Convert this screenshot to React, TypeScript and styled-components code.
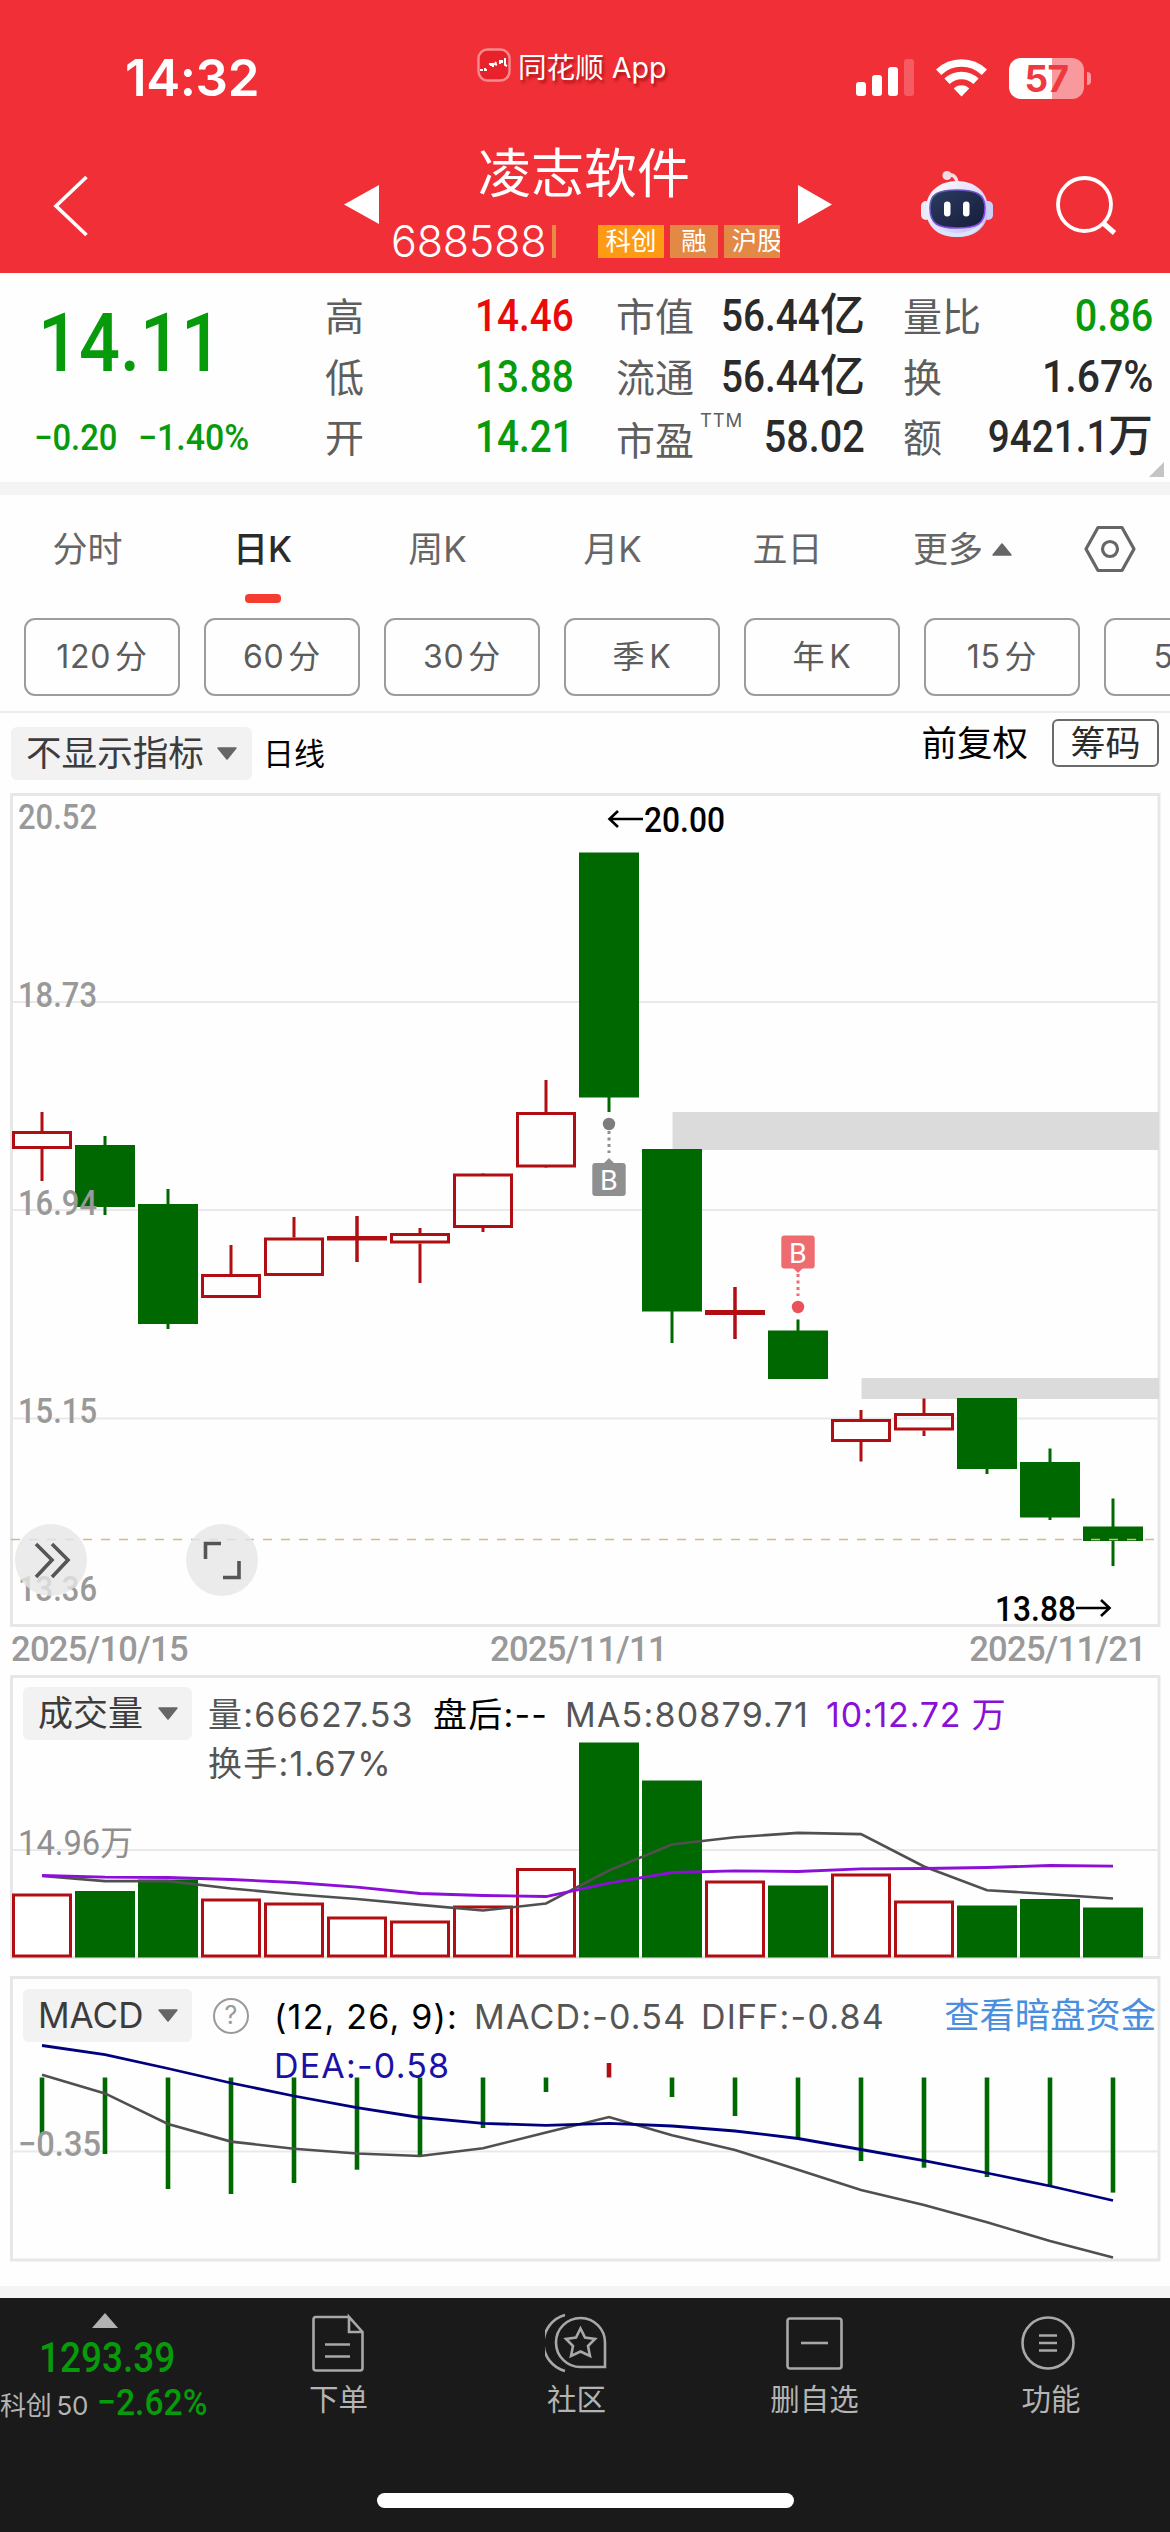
import React from "react";
import styled, { createGlobalStyle } from "styled-components";

const CJK = `"Noto Sans CJK SC"`;
const UI = `Inter, ${CJK}, sans-serif`;
const DIN = `Roboto, ${CJK}, sans-serif`;
const GREEN = "#079a0b";
const UP = "#b00e12";
const DOWN = "#006800";

const Global = createGlobalStyle`
  body { margin: 0; background: #fff; font-family: ${UI}; color: #333; }
  * { box-sizing: border-box; }
  button { font: inherit; color: inherit; background: none; border: 0; padding: 0; margin: 0; }
  svg { display: block; flex: none; }
`;

const Screen = styled.div`
  width: 1170px;
  height: 2532px;
  overflow: hidden;
  display: flex;
  flex-direction: column;
  background: #fefefe;
  white-space: nowrap;
`;

/* ---------- header ---------- */
const Header = styled.header`
  height: 273px;
  flex: none;
  background: #f12f37;
  color: #fff;
`;
const StatusBar = styled.div`
  height: 140px;
  padding-top: 40px;
  display: grid;
  grid-template-columns: 477px 1fr 314px;
  align-items: start;
`;
const Time = styled.div`
  padding-left: 125px;
  font-size: 51px;
  font-weight: 600;
  line-height: 76px;
  letter-spacing: -0.4px;
`;
const Watermark = styled.div`
  height: 50px;
  display: flex;
  align-items: center;
  gap: 7px;
  font-size: 28.6px;
  text-shadow: 2px 3px 3px rgba(120, 0, 0, 0.6);
`;
const Indicators = styled.div`
  height: 76px;
  display: flex;
  align-items: center;
`;
const Battery = styled.div`
  width: 75px;
  height: 41px;
  margin-left: 22px;
  border-radius: 12px;
  background: linear-gradient(90deg, #fff 57%, #f8999d 57%);
  color: #ee3940;
  font-size: 37px;
  font-weight: 700;
  line-height: 41px;
  text-align: center;
  letter-spacing: -0.5px;
`;
const BatteryTip = styled.div`
  width: 4px;
  height: 13px;
  margin-left: 3px;
  border-radius: 0 5px 5px 0;
  background: #f8999d;
`;
const TitleBar = styled.div`
  height: 133px;
  display: flex;
  align-items: flex-start;
`;
const IconButton = styled.button<{ $left: number; $top: number }>`
  margin-left: ${(p) => p.$left}px;
  margin-top: ${(p) => p.$top}px;
`;
const TitleBlock = styled.div`
  width: 419px;
`;
const StockName = styled.h1`
  margin: 0;
  padding-right: 9px;
  text-align: center;
  font-size: 53px;
  font-weight: 400;
  line-height: 68px;
`;
const CodeRow = styled.div`
  margin-top: 15px;
  width: 401px;
  height: 36px;
  padding-left: 12px;
  display: flex;
  align-items: center;
  overflow: hidden;
`;
const Code = styled.span`
  flex: none;
  width: 161px;
  font-size: 43px;
  font-weight: 300;
  line-height: 36px;
  letter-spacing: -0.2px;
`;
const CodeBar = styled.span`
  flex: none;
  width: 4px;
  height: 33px;
  margin-right: 42px;
  background: #e78b45;
`;
const Tag = styled.span<{ $bg: string; $w: number }>`
  flex: none;
  width: ${(p) => p.$w}px;
  height: 33px;
  margin-right: 6px;
  background: ${(p) => p.$bg};
  font-size: 25.5px;
  line-height: 32px;
  text-align: center;
`;

/* ---------- quote ---------- */
const Quote = styled.section`
  position: relative;
  height: 209px;
  flex: none;
  padding-right: 17px;
  display: grid;
  grid-template-columns: 325px 249px 249px 250px;
  column-gap: 0;
`;
const Din = styled.span<{ $scale?: number; $origin?: string }>`
  display: inline-block;
  font-family: ${DIN};
  font-weight: 500;
  transform: scaleX(${(p) => p.$scale ?? 0.87});
  transform-origin: ${(p) => p.$origin ?? "left"} center;
`;
const PriceBox = styled.div`
  color: ${GREEN};
  padding-top: 29px;
`;
const Price = styled.div`
  padding-left: 38px;
  font-size: 82px;
  line-height: 80px;
`;
const Change = styled.div`
  padding: 35px 0 0 34px;
  display: grid;
  grid-template-columns: 104px auto;
  font-size: 36px;
  line-height: 40px;
`;
const Stats = styled.div<{ $shift: number }>`
  margin-left: ${(p) => p.$shift}px;
  margin-right: ${(p) => -p.$shift}px;
  padding-top: 13px;
`;
const Stat = styled.div`
  height: 60.6px;
  display: flex;
  justify-content: space-between;
  align-items: center;
`;
const StatLabel = styled.span<{ $drop?: number }>`
  font-size: 39px;
  line-height: 60px;
  color: #5e5e5e;
  padding-top: ${(p) => p.$drop ?? 2}px;
  display: flex;
`;
const Super = styled.sup`
  margin-left: 6px;
  font-size: 18.5px;
  line-height: 18px;
  letter-spacing: 0.8px;
  align-self: flex-start;
`;
const StatValue = styled.span<{ $color?: string }>`
  display: flex;
  font-family: ${DIN};
  font-weight: 500;
  font-size: 45px;
  line-height: 60px;
  color: ${(p) => p.$color ?? "#2a2a2a"};
`;
const Corner = styled.svg`
  position: absolute;
  right: 6px;
  bottom: 5px;
`;
const Band = styled.div<{ $h: number }>`
  height: ${(p) => p.$h}px;
  flex: none;
  background: #f4f4f4;
`;

/* ---------- tabs ---------- */
const Tabs = styled.nav`
  flex: none;
  height: 123px;
  display: grid;
  grid-template-columns: repeat(6, 175px) 120px;
`;
const Tab = styled.button<{ $active?: boolean }>`
  display: flex;
  flex-direction: column;
  align-items: center;
  padding-top: 21px;
  font-size: 35px;
  line-height: 66px;
  color: ${(p) => (p.$active ? "#2b2b2b" : "#666")};
  font-weight: ${(p) => (p.$active ? 500 : 400)};
`;
const TabLabel = styled.span`
  display: flex;
  align-items: center;
  gap: 9px;
  height: 66px;
`;
const Marker = styled.span`
  width: 36px;
  height: 9px;
  margin-top: 12px;
  border-radius: 4px;
  background: #f63c31;
`;
const Periods = styled.div`
  flex: none;
  height: 93px;
  padding-left: 24px;
  display: flex;
  gap: 24px;
  overflow: hidden;
`;
const Period = styled.button`
  flex: none;
  width: 156px;
  height: 78px;
  border: 2px solid #9c9c9c;
  border-radius: 11px;
  font-size: 32px;
  line-height: 74px;
  color: #5c5c5c;
  display: flex;
  justify-content: center;
  gap: 4px;
  letter-spacing: 0.7px;
`;
const Toolbar = styled.div`
  flex: none;
  height: 82px;
  border-top: 2px solid #ececec;
  padding: 0 11px;
  display: flex;
  align-items: flex-start;
`;
const Select = styled.button<{ $w: number; $top: number; $left?: number; $gap?: number; $fs?: number }>`
  flex: none;
  width: ${(p) => p.$w}px;
  height: 53px;
  margin-top: ${(p) => p.$top}px;
  margin-left: ${(p) => p.$left ?? 0}px;
  padding-left: 15px;
  border-radius: 6px;
  background: #f2f2f2;
  color: #3c3c3c;
  font-size: ${(p) => p.$fs ?? 35}px;
  line-height: 53px;
  display: flex;
  align-items: center;
  gap: ${(p) => p.$gap ?? 15}px;
`;
const LineKind = styled.span`
  margin: 14px 0 0 11px;
  font-size: 31px;
  line-height: 53px;
  color: #000;
`;
const Adjust = styled.span`
  margin-left: auto;
  font-size: 35.5px;
  line-height: 61px;
  color: #000;
`;
const Chips = styled.button`
  margin: 6px 0 0 24px;
  width: 107px;
  height: 48px;
  border: 2px solid #6b6b6b;
  border-radius: 6px;
  font-size: 35px;
  line-height: 43px;
  color: #2c2c2c;
`;

/* ---------- charts ---------- */
const Pane = styled.section<{ $h: number; $gap: number }>`
  position: relative;
  flex: none;
  height: ${(p) => p.$h}px;
  margin-bottom: ${(p) => p.$gap}px;
  display: grid;
  & > * { grid-area: 1 / 1; }
`;
const Plot = styled.svg`
  text { font-family: ${DIN}; }
`;
const Round = styled.button<{ $x: number }>`
  position: absolute;
  left: ${(p) => p.$x}px;
  bottom: 31px;
  width: 72px;
  height: 72px;
  border-radius: 50%;
  background: rgba(230, 230, 230, 0.8);
  display: grid;
  place-items: center;
`;
const Dates = styled.div`
  flex: none;
  height: 48px;
  padding: 0 24px 0 11px;
  display: flex;
  justify-content: space-between;
  font-family: ${DIN};
  font-size: 34.5px;
  font-weight: 500;
  line-height: 45px;
  color: #999;
  letter-spacing: -0.7px;
`;
const Legend = styled.div`
  padding-left: 23px;
  display: flex;
  align-items: flex-start;
  z-index: 1;
`;
const Readings = styled.div<{ $left: number; $top: number }>`
  margin-left: ${(p) => p.$left}px;
  padding-top: ${(p) => p.$top}px;
  font-size: 34px;
  line-height: 48.5px;
`;
const Line = styled.div`
  display: flex;
`;
const Reading = styled.span<{ $w?: number; $color?: string; $ls?: number }>`
  width: ${(p) => (p.$w ? `${p.$w}px` : "auto")};
  color: ${(p) => p.$color ?? "#555"};
  letter-spacing: ${(p) => p.$ls ?? 1.2}px;
`;
const Help = styled.span`
  flex: none;
  width: 36px;
  height: 36px;
  margin: 22px 0 0 21px;
  border: 2.5px solid #9a9a9a;
  border-radius: 50%;
  font-size: 25px;
  line-height: 31px;
  text-align: center;
  color: #9a9a9a;
`;
const DarkPool = styled.a`
  margin: 16px 0 0 auto;
  padding-right: 14px;
  font-size: 35.3px;
  line-height: 48px;
  color: #4a8fdf;
`;

/* ---------- bottom bar ---------- */
const Bottom = styled.footer`
  height: 234px;
  flex: none;
  background: #1a1a1a;
  color: #b4b4b4;
  display: flex;
  flex-direction: column;
`;
const BottomRow = styled.div`
  height: 195px;
  display: grid;
  grid-template-columns: 221px 233px 243px 233px 240px;
`;
const Index = styled.div`
  padding-top: 15px;
  display: flex;
  flex-direction: column;
`;
const IndexValue = styled.div`
  height: 43px;
  padding: 8px 0 0 39px;
  font-size: 42px;
  line-height: 42px;
  color: ${GREEN};
`;
const IndexLine = styled.div`
  margin-top: 14px;
  display: flex;
  line-height: 36px;
`;
const IndexName = styled.span`
  width: 97px;
  font-size: 26px;
  line-height: 41px;
  letter-spacing: -0.3px;
  display: flex;
  gap: 5px;
`;
const IndexPct = styled(Din)`
  font-size: 37px;
  color: ${GREEN};
`;
const Item = styled.button`
  display: flex;
  flex-direction: column;
  align-items: center;
  padding-top: 15px;
  font-size: 29.5px;
`;
const ItemLabel = styled.span`
  margin-top: 4px;
  padding-left: 2px;
  line-height: 44px;
`;
const Home = styled.div`
  width: 417px;
  height: 15px;
  margin-left: 377px;
  border-radius: 8px;
  background: #fff;
`;

/* ---------- data ---------- */
type Candle = { up?: boolean; hi: number; a: number; b: number; lo: number; vol: number };
const candles: Candle[] = [
  { up: true, hi: 1112, a: 1131, b: 1149, lo: 1181, vol: 1893 },
  { hi: 1136, a: 1145, b: 1207, lo: 1215, vol: 1890.5 },
  { hi: 1189, a: 1204, b: 1324, lo: 1329, vol: 1879 },
  { up: true, hi: 1245, a: 1274, b: 1298, lo: 1298, vol: 1898 },
  { up: true, hi: 1217, a: 1237.5, b: 1276, lo: 1276, vol: 1902 },
  { up: true, hi: 1216, a: 1236, b: 1240.5, lo: 1262, vol: 1916 },
  { up: true, hi: 1228, a: 1233, b: 1243.5, lo: 1283, vol: 1920 },
  { up: true, hi: 1173, a: 1173.5, b: 1228, lo: 1232, vol: 1905 },
  { up: true, hi: 1080, a: 1112, b: 1167.5, lo: 1167, vol: 1867.5 },
  { hi: 853, a: 852.5, b: 1097.5, lo: 1112, vol: 1742 },
  { hi: 1149, a: 1149, b: 1311.5, lo: 1343, vol: 1780 },
  { up: true, hi: 1287, a: 1310, b: 1315, lo: 1339, vol: 1880 },
  { hi: 1319.5, a: 1330.5, b: 1379, lo: 1379, vol: 1885 },
  { up: true, hi: 1410, a: 1419, b: 1442, lo: 1461.5, vol: 1873 },
  { up: true, hi: 1398.5, a: 1413, b: 1430.5, lo: 1436, vol: 1900 },
  { hi: 1398, a: 1398, b: 1469, lo: 1474, vol: 1905 },
  { hi: 1448.5, a: 1462, b: 1517.5, lo: 1520, vol: 1898.5 },
  { hi: 1498.5, a: 1526.5, b: 1541, lo: 1566, vol: 1907 },
];
const volMa5 = [1875.5, 1880.6, 1880.6, 1888, 1893.7, 1898.5, 1904.4, 1910, 1903, 1870, 1844, 1836.7, 1832.4, 1833.6, 1866, 1889.7, 1893.7, 1898];
const volMa10 = [1875, 1876.7, 1877, 1879, 1882, 1886.6, 1893, 1895, 1896, 1882.6, 1872, 1870.4, 1871, 1868.4, 1868, 1867, 1865, 1865.6];
const macd = [2134.5, 2154, 2189, 2194, 2183, 2169.7, 2155, 2128, 2092, 2063, 2097, 2116, 2138.5, 2161, 2167.7, 2177, 2187, 2192.6];
const diff = [2074.8, 2093.4, 2124, 2141.6, 2148.7, 2153.5, 2156, 2148.3, 2132.5, 2117, 2135.3, 2150, 2169.7, 2190, 2205, 2222.3, 2241, 2257.5];
const dea = [2045.5, 2054.6, 2068.5, 2083, 2096, 2107.6, 2117.5, 2123.4, 2125.4, 2123.4, 2126, 2131, 2138.5, 2149.5, 2160.6, 2173, 2186, 2200.5];

const cx = (i: number) => 42 + 63 * i;
const pts = (ys: number[]) => ys.map((y, i) => `${cx(i)},${y}`).join(" ");

const Caret = ({ up, w = 18, h = 12, fill = "#666" }: { up?: boolean; w?: number; h?: number; fill?: string }) => (
  <svg width={w} height={h} viewBox="0 0 18 12" preserveAspectRatio="none">
    <path d={up ? "M9 1 17 11H1Z" : "M1 1H17L9 11Z"} fill={fill} stroke={fill} strokeWidth="1.5" strokeLinejoin="round" />
  </svg>
);

const Figure = ({ value, unit, color, scale = 0.86 }: { value: string; unit?: string; color?: string; scale?: number }) => (
  <StatValue $color={color}>
    <Din $scale={scale} $origin="right">{value}</Din>
    {unit}
  </StatValue>
);

const Axis = ({ x = 18, y, w = 79, children, fill = "#999", weight = 500 }: { x?: number; y: number; w?: number; children: string; fill?: string; weight?: number }) => (
  <text x={x} y={y} fontSize="34.5" fontWeight={weight} fill={fill} textLength={w} lengthAdjust="spacingAndGlyphs">
    {children}
  </text>
);

const Frame = ({ y, h }: { y: number; h: number }) => (
  <rect x="11.5" y={y} width="1147.5" height={h} fill="none" stroke="#e7e7e7" strokeWidth="3" />
);

const KLine = () => (
  <Plot width="1170" height="834" viewBox="0 793 1170 834">
    <Frame y={794.5} h={831} />
    {[1002, 1210, 1418.5].map((y) => (
      <path key={y} d={`M12 ${y}H1159`} stroke="#e9e9e9" strokeWidth="2" />
    ))}
    <rect x="672.5" y="1112" width="486.5" height="38" fill="#dbdbdb" />
    <rect x="861.5" y="1378" width="297.5" height="21" fill="#dbdbdb" />
    {candles.map((c, i) => {
      const x = cx(i);
      return c.up ? (
        <g key={i} stroke={UP} strokeWidth="3" fill="none">
          <path d={`M${x} ${c.hi}V${c.a}M${x} ${c.b}V${c.lo}`} />
          <rect x={x - 28.5} y={c.a + 1.5} width="57" height={Math.max(c.b - c.a - 3, 1.5)} />
        </g>
      ) : (
        <g key={i} fill={DOWN}>
          <rect x={x - 30} y={c.a} width="60" height={c.b - c.a} />
          <rect x={x - 1.5} y={c.hi} width="3" height={c.lo - c.hi} />
        </g>
      );
    })}
    <path d="M357 1216V1262M735 1287V1339" stroke={UP} strokeWidth="3" />
    <path d="M11 1539.5H1159" stroke="#d8b787" strokeWidth="1.6" strokeDasharray="9 9" />
    <g fill="#8f8f8f">
      <circle cx="609" cy="1124" r="6.2" fill="#7d7d7d" />
      <path d="M609 1131V1153" stroke="#8f8f8f" strokeWidth="3" strokeDasharray="3 3.5" />
      <path d="M603 1164 609 1158 615 1164Z" />
      <rect x="592.3" y="1163" width="33.4" height="33" rx="3" />
    </g>
    <g fill="#ee6b70">
      <circle cx="798" cy="1307" r="6.2" fill="#ea5257" />
      <path d="M798 1274V1296" stroke="#ee6b70" strokeWidth="3" strokeDasharray="3 3.5" />
      <path d="M792 1267 798 1273 804 1267Z" />
      <rect x="781.3" y="1235.5" width="33.4" height="33" rx="3" />
    </g>
    <g fill="#fff" fontSize="28.5" textAnchor="middle">
      <text x="609" y="1190">B</text>
      <text x="798" y="1262.5">B</text>
    </g>
    <Axis y={829}>20.52</Axis>
    <Axis y={1006.5}>18.73</Axis>
    <Axis y={1214.7}>16.94</Axis>
    <Axis y={1423}>15.15</Axis>
    <Axis y={1601}>13.36</Axis>
    <g fill="none" stroke="#000" strokeWidth="2.6">
      <path d="M643 819H610M618 811 609.500 819 618 827" />
      <path d="M1076 1608H1109M1101 1600 1109.500 1608 1101 1616" />
    </g>
    <Axis x={644} y={832.3} w={81} fill="#000" weight={500}>20.00</Axis>
    <Axis x={995} y={1620.7} w={81} fill="#000" weight={500}>13.88</Axis>
  </Plot>
);

const Volume = () => (
  <Plot width="1170" height="284" viewBox="0 1674.500 1170 284">
    <Frame y={1676} h={281} />
    <path d="M12 1849.5H1159" stroke="#e9e9e9" strokeWidth="2" />
    {candles.map((c, i) =>
      c.up ? (
        <rect key={i} x={cx(i) - 28.5} y={c.vol + 1.5} width="57" height={1955.5 - c.vol - 1.5} fill="#fff" stroke={UP} strokeWidth="3" />
      ) : (
        <rect key={i} x={cx(i) - 30} y={c.vol} width="60" height={1957 - c.vol} fill={DOWN} />
      )
    )}
    <polyline points={pts(volMa5)} fill="none" stroke="#505050" strokeWidth="2.6" />
    <polyline points={pts(volMa10)} fill="none" stroke="#8b0fd6" strokeWidth="2.8" />
    <Axis x={18} y={1854.5} w={115} weight={400} fill="#8f8f8f">14.96万</Axis>
  </Plot>
);

const Macd = () => (
  <Plot width="1170" height="286" viewBox="0 1976 1170 286">
    <Frame y={1977.5} h={282.5} />
    <path d="M12 2151.5H1159" stroke="#e9e9e9" strokeWidth="2" />
    {macd.map((y, i) => (
      <path key={i} d={`M${cx(i)} 2077.5V${y}`} stroke={i === 9 ? UP : DOWN} strokeWidth="4.6" />
    ))}
    <polyline points={pts(diff)} fill="none" stroke="#505050" strokeWidth="2.6" />
    <polyline points={pts(dea)} fill="none" stroke="#00007f" strokeWidth="2.8" />
    <Axis x={18} y={2156} w={83}>−0.35</Axis>
  </Plot>
);

const AppLogo = () => (
  <svg width="34" height="34" viewBox="0 0 34 34">
    <rect x="1.5" y="1.5" width="31" height="31" rx="9" fill="#e8222a" stroke="#f98a8e" strokeWidth="2.4" />
    <path d="M3 22h3M8 20v2h2M12 16h2v2M16 15v4M19 14l-1 2 2 1M23 12v4M25 12v3M28 10v7l2 1" stroke="#fff" strokeWidth="2" fill="none" />
  </svg>
);

const Signal = () => (
  <svg width="58" height="38" viewBox="0 0 58 38">
    <g fill="#fff">
      <rect x="0" y="23" width="10" height="14" rx="3" />
      <rect x="16" y="16" width="10" height="21" rx="3" />
      <rect x="32" y="8" width="10" height="29" rx="3" />
      <rect x="48" y="0" width="10" height="37" rx="3" opacity="0.22" />
    </g>
  </svg>
);

const WifiIcon = styled.svg`
  margin-left: 22px;
`;
const Wifi = () => (
  <WifiIcon width="51" height="38" viewBox="0 0 51 38">
    <g fill="none" stroke="#fff" strokeWidth="7.6">
      <path d="M2.600 13.200A33 33 0 0 1 48.400 13.200" />
      <path d="M11 22.300A21 21 0 0 1 40 22.300" />
    </g>
    <path d="M17.800 29.500A11 11 0 0 1 33.200 29.500L25.500 37.500Z" fill="#fff" />
  </WifiIcon>
);

const Robot = () => (
  <svg width="74" height="68" viewBox="0 0 74 68">
    <defs>
      <linearGradient id="shell" x1="0" y1="0" x2="1" y2="1">
        <stop offset="0" stopColor="#fff" />
        <stop offset="0.5" stopColor="#e3defa" />
        <stop offset="1" stopColor="#b9b4ef" />
      </linearGradient>
      <linearGradient id="face" x1="0" y1="0" x2="1" y2="1">
        <stop offset="0" stopColor="#2c3c62" />
        <stop offset="1" stopColor="#151c3a" />
      </linearGradient>
      <linearGradient id="rim" x1="0" y1="0" x2="1" y2="1">
        <stop offset="0" stopColor="#5a5f9a" />
        <stop offset="0.6" stopColor="#7a4be0" />
        <stop offset="1" stopColor="#8f3ff0" />
      </linearGradient>
    </defs>
    <rect x="1" y="31" width="10" height="19" rx="5" fill="#e9ebfb" />
    <rect x="63" y="31" width="10" height="19" rx="5" fill="#ccd0f6" />
    <path d="M27 5.500Q36 3 37 13" fill="none" stroke="#f5dfe6" strokeWidth="3.4" />
    <circle cx="27" cy="5.500" r="4.600" fill="#f3dce4" />
    <path d="M37 11C55 11 68 22 68 39C68 57 56 67 37 67C18 67 6 57 6 39C6 22 19 11 37 11Z" fill="url(#shell)" />
    <path d="M10 52Q37 74 64 52Q56 67 37 67Q18 67 10 52Z" fill="#d9e6fb" />
    <path d="M37 20C56 20 65 24 65 38C65 54 57 58 37 58C18 58 10 54 10 38C10 24 18 20 37 20Z" fill="url(#face)" stroke="url(#rim)" strokeWidth="1.600" />
    <rect x="24" y="31.500" width="6.500" height="15" rx="3.200" fill="#fff" />
    <rect x="43" y="31.500" width="6.500" height="15" rx="3.200" fill="#fff" />
  </svg>
);

const navIcon = { width: 62, height: 60, fill: "none", stroke: "#a8a8a8", strokeWidth: 2.6 } as const;
const IndexArrow = styled.svg`
  margin-left: 92px;
`;

export default function App() {
  return (
    <Screen>
      <Global />
      <Header>
        <StatusBar>
          <Time>14:32</Time>
          <Watermark>
            <AppLogo />
            同花顺 App
          </Watermark>
          <Indicators>
            <Signal />
            <Wifi />
            <Battery>57</Battery>
            <BatteryTip />
          </Indicators>
        </StatusBar>
        <TitleBar>
          <IconButton $left={52} $top={35} aria-label="back">
            <svg width="37" height="62" viewBox="0 0 37 62">
              <path d="M34.500 2 4 31 34.500 60" fill="none" stroke="#fff" strokeWidth="3.600" />
            </svg>
          </IconButton>
          <IconButton $left={255} $top={45} aria-label="previous">
            <svg width="35" height="39" viewBox="0 0 35 39">
              <path d="M35 0V39L0 19.500Z" fill="#fff" />
            </svg>
          </IconButton>
          <TitleBlock>
            <StockName>凌志软件</StockName>
            <CodeRow>
              <Code>688588</Code>
              <CodeBar />
              <Tag $bg="#fe9b15" $w={66}>科创</Tag>
              <Tag $bg="#e28946" $w={48}>融</Tag>
              <Tag $bg="#e28946" $w={66}>沪股</Tag>
            </CodeRow>
          </TitleBlock>
          <IconButton $left={0} $top={45} aria-label="next">
            <svg width="34" height="39" viewBox="0 0 34 39">
              <path d="M0 0V39L34 19.500Z" fill="#fff" />
            </svg>
          </IconButton>
          <IconButton $left={88} $top={30} aria-label="assistant">
            <Robot />
          </IconButton>
          <IconButton $left={60} $top={34} aria-label="search">
            <svg width="64" height="64" viewBox="0 0 64 64">
              <g fill="none" stroke="#fff" strokeWidth="3.800">
                <circle cx="30.500" cy="30.500" r="26.500" />
                <path d="M48.500 48.500 60.500 59" strokeWidth="5" />
              </g>
            </svg>
          </IconButton>
        </TitleBar>
      </Header>

      <Quote>
        <PriceBox>
          <Price><Din $scale={0.88}>14.11</Din></Price>
          <Change>
            <Din $scale={0.91}>−0.20</Din>
            <Din $scale={0.94}>−1.40%</Din>
          </Change>
        </PriceBox>
        <Stats $shift={0}>
          <Stat><StatLabel>高</StatLabel><Figure color="#ec0909" value="14.46" /></Stat>
          <Stat><StatLabel>低</StatLabel><Figure color={GREEN} value="13.88" /></Stat>
          <Stat><StatLabel>开</StatLabel><Figure color={GREEN} value="14.21" /></Stat>
        </Stats>
        <Stats $shift={42}>
          <Stat><StatLabel>市值</StatLabel><Figure value="56.44" unit="亿" /></Stat>
          <Stat><StatLabel>流通</StatLabel><Figure value="56.44" unit="亿" /></Stat>
          <Stat><StatLabel $drop={8}>市盈<Super>TTM</Super></StatLabel><Figure value="58.02" scale={0.88} /></Stat>
        </Stats>
        <Stats $shift={80}>
          <Stat><StatLabel>量比</StatLabel><Figure color={GREEN} value="0.86" scale={0.88} /></Stat>
          <Stat><StatLabel>换</StatLabel><Figure value="1.67%" scale={0.91} /></Stat>
          <Stat><StatLabel>额</StatLabel><Figure value="9421.1" unit="万" scale={0.86} /></Stat>
        </Stats>
        <Corner width="15" height="15" viewBox="0 0 15 15"><path d="M15 0V15H0Z" fill="#c4c4c4" /></Corner>
      </Quote>
      <Band $h={13} />

      <Tabs>
        <Tab><TabLabel>分时</TabLabel></Tab>
        <Tab $active><TabLabel>日K</TabLabel><Marker /></Tab>
        <Tab><TabLabel>周K</TabLabel></Tab>
        <Tab><TabLabel>月K</TabLabel></Tab>
        <Tab><TabLabel>五日</TabLabel></Tab>
        <Tab><TabLabel>更多<Caret up w={20} h={13} /></TabLabel></Tab>
        <Tab aria-label="settings">
          <TabLabel>
            <svg width="54" height="48" viewBox="0 0 54 48">
              <g fill="none" stroke="#666" strokeWidth="3.200" strokeLinejoin="round">
                <path d="M15 2.500H39L51 24 39 45.500H15L3 24Z" />
                <circle cx="27" cy="24" r="7.500" />
              </g>
            </svg>
          </TabLabel>
        </Tab>
      </Tabs>
      <Periods>
        {[["120", "分"], ["60", "分"], ["30", "分"], ["季", "K"], ["年", "K"], ["15", "分"], ["5", "分"]].map(([a, b]) => (
          <Period key={a}><span>{a}</span><span>{b}</span></Period>
        ))}
      </Periods>
      <Toolbar>
        <Select $w={241} $top={14} $fs={35.6} $gap={13}>不显示指标<Caret w={20} h={13} /></Select>
        <LineKind>日线</LineKind>
        <Adjust>前复权</Adjust>
        <Chips>筹码</Chips>
      </Toolbar>

      <Pane $h={834} $gap={0}>
        <KLine />
        <Round $x={15} aria-label="expand">
          <svg width="40" height="40" viewBox="0 0 40 40">
            <path d="M5 4 21 20 5 37M21 4 37 20 21 37" fill="none" stroke="#555" strokeWidth="3.600" />
          </svg>
        </Round>
        <Round $x={186} aria-label="fullscreen">
          <svg width="40" height="40" viewBox="0 0 40 40">
            <path d="M3.500 19V3.500H19M37 21V37.500H21" fill="none" stroke="#555" strokeWidth="3.600" />
          </svg>
        </Round>
      </Pane>
      <Dates>
        <span>2025/10/15</span>
        <span>2025/11/11</span>
        <span>2025/11/21</span>
      </Dates>

      <Pane $h={284} $gap={17}>
        <Volume />
        <Legend>
          <Select $w={169} $top={12}>成交量<Caret w={20} h={13} /></Select>
          <Readings $left={16} $top={16}>
            <Line>
              <Reading $w={225}>量:66627.53</Reading>
              <Reading $w={132} $color="#000">盘后:--</Reading>
              <Reading $w={261}>MA5:80879.71</Reading>
              <Reading $color="#8a10d8" $ls={0.8}>10:12.72 万</Reading>
            </Line>
            <Line><Reading>换手:1.67%</Reading></Line>
          </Readings>
        </Legend>
      </Pane>
      <Pane $h={286} $gap={24}>
        <Macd />
        <Legend>
          <Select $w={169} $top={13}>MACD<Caret w={20} h={13} /></Select>
          <Help>?</Help>
          <Readings $left={25} $top={17}>
            <Line>
              <Reading $w={200} $color="#000">(12, 26, 9):</Reading>
              <Reading $w={227}>MACD:-0.54</Reading>
              <Reading>DIFF:-0.84</Reading>
            </Line>
            <Line><Reading $color="#1a12a6">DEA:-0.58</Reading></Line>
          </Readings>
          <DarkPool>查看暗盘资金</DarkPool>
        </Legend>
      </Pane>
      <Band $h={12} />

      <Bottom>
        <BottomRow>
          <Index>
            <IndexArrow width="26" height="15" viewBox="0 0 26 15"><path d="M13 0 26 15H0Z" fill="#b2b2b2" /></IndexArrow>
            <IndexValue><Din $scale={0.88}>1293.39</Din></IndexValue>
            <IndexLine>
              <IndexName><span>科创</span><span>50</span></IndexName>
              <IndexPct $scale={0.91}>−2.62%</IndexPct>
            </IndexLine>
          </Index>
          <Item>
            <svg {...navIcon} viewBox="0 0 62 60">
              <path d="M42 4H9Q6.500 4 6.500 6.500V55Q6.500 57.500 9 57.500H53Q55.500 57.500 55.500 55V19L42 4V19H55.500M18 31.500H43M18 43.500H43" />
            </svg>
            <ItemLabel>下单</ItemLabel>
          </Item>
          <Item>
            <svg {...navIcon} viewBox="0 0 62 60">
              <path d="M60 54H36A24.500 24.500 0 1 1 60 30ZM20 2A29 29 0 0 0 20 58" />
              <path d="M35.500 15.500 40 24.500 50 26 43 33 45 43 35.500 38.500 26 43 28 33 21 26 31 24.500Z" />
            </svg>
            <ItemLabel>社区</ItemLabel>
          </Item>
          <Item>
            <svg {...navIcon} viewBox="0 0 62 60">
              <rect x="4.500" y="5.500" width="54" height="50" rx="2.500" />
              <path d="M18 30H45" />
            </svg>
            <ItemLabel>删自选</ItemLabel>
          </Item>
          <Item>
            <svg {...navIcon} viewBox="0 0 62 60">
              <circle cx="29" cy="30" r="25.500" />
              <path d="M20 22.500H38M20 30H38M20 37.500H38" />
            </svg>
            <ItemLabel>功能</ItemLabel>
          </Item>
        </BottomRow>
        <Home />
      </Bottom>
    </Screen>
  );
}
